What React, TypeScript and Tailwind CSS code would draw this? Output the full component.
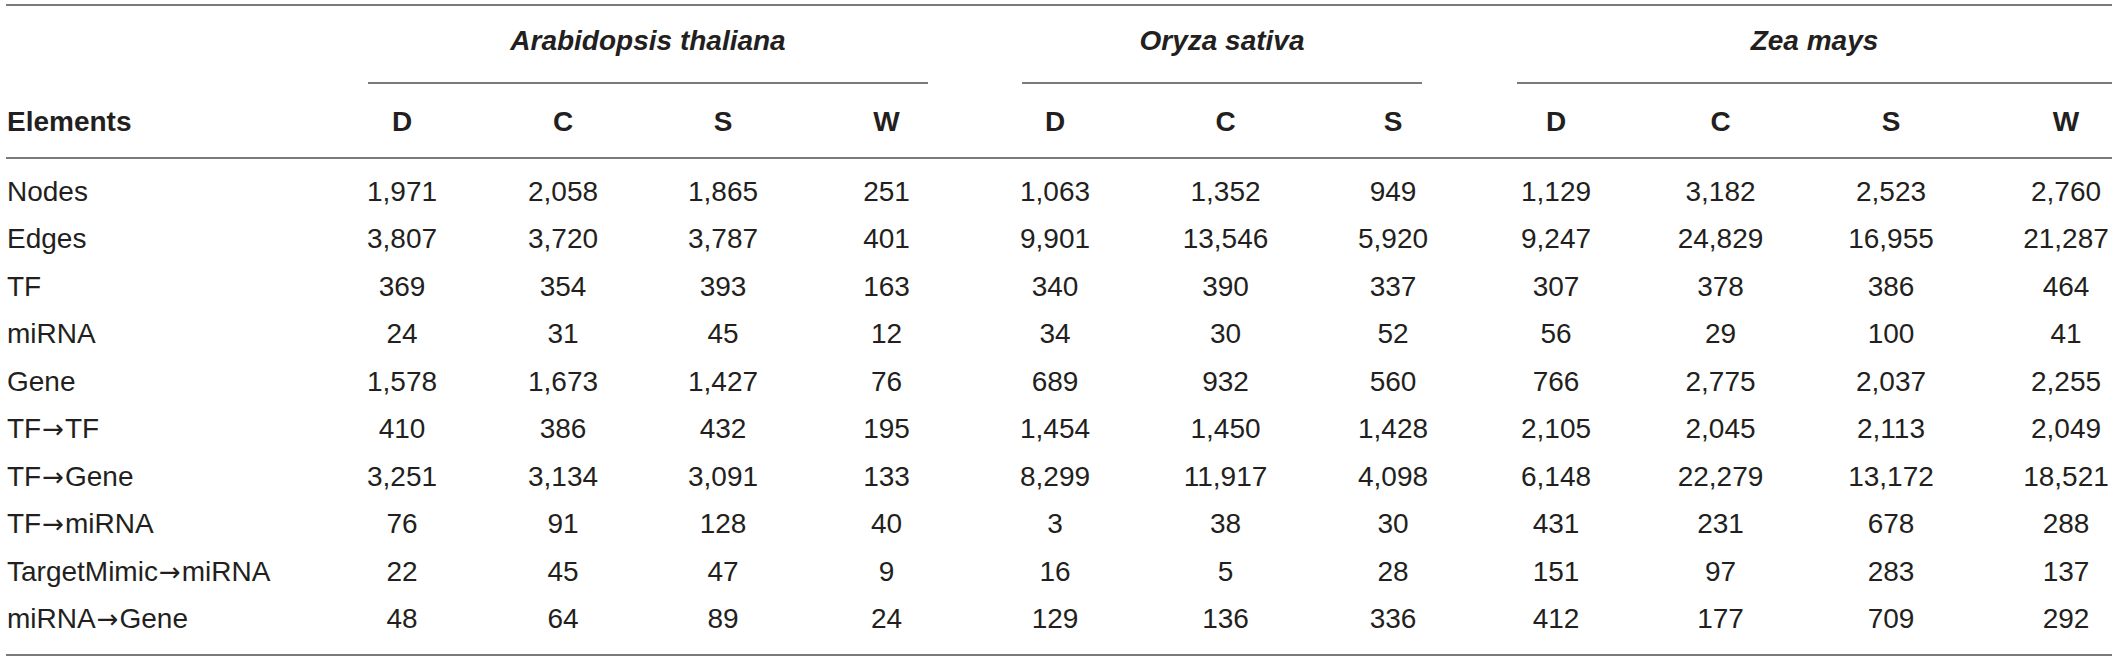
// 统计表格: 三个物种的网络元素数量
// 用 grid 排布列, 每列宽度按原图量出来

// 列宽: 第一列是 Elements, 后面 11 列是数据
const GRID =
  'grid grid-cols-[315px_162px_160px_160px_167px_170px_171px_164px_162px_167px_174px_134px]'

const groups = [
  { name: 'Arabidopsis thaliana', cols: ['D', 'C', 'S', 'W'], span: 'col-span-4', line: 'ml-[47px] mr-[42px]' },
  { name: 'Oryza sativa', cols: ['D', 'C', 'S'], span: 'col-span-3', line: 'ml-[52px] mr-[53px]' },
  { name: 'Zea mays', cols: ['D', 'C', 'S', 'W'], span: 'col-span-4', line: 'ml-[42px]' },
]

const rows: [string, string[]][] = [
  ['Nodes', ['1,971', '2,058', '1,865', '251', '1,063', '1,352', '949', '1,129', '3,182', '2,523', '2,760']],
  ['Edges', ['3,807', '3,720', '3,787', '401', '9,901', '13,546', '5,920', '9,247', '24,829', '16,955', '21,287']],
  ['TF', ['369', '354', '393', '163', '340', '390', '337', '307', '378', '386', '464']],
  ['miRNA', ['24', '31', '45', '12', '34', '30', '52', '56', '29', '100', '41']],
  ['Gene', ['1,578', '1,673', '1,427', '76', '689', '932', '560', '766', '2,775', '2,037', '2,255']],
  ['TF→TF', ['410', '386', '432', '195', '1,454', '1,450', '1,428', '2,105', '2,045', '2,113', '2,049']],
  ['TF→Gene', ['3,251', '3,134', '3,091', '133', '8,299', '11,917', '4,098', '6,148', '22,279', '13,172', '18,521']],
  ['TF→miRNA', ['76', '91', '128', '40', '3', '38', '30', '431', '231', '678', '288']],
  ['TargetMimic→miRNA', ['22', '45', '47', '9', '16', '5', '28', '151', '97', '283', '137']],
  ['miRNA→Gene', ['48', '64', '89', '24', '129', '136', '336', '412', '177', '709', '292']],
]

// 最后一列比较窄, 内容往右推一点
function Cell({ i, children, bold }: { i: number; children: string; bold?: boolean }) {
  return (
    <div className={`flex items-center justify-center ${i === 10 ? 'pl-[42px]' : ''} ${bold ? 'font-bold' : ''}`}>
      {children}
    </div>
  )
}

// 行名里的箭头换成细长一点的字体
function Label({ text }: { text: string }) {
  const parts = text.split('→')
  return (
    <div className="flex items-center pl-[1px]">
      {parts.map((p, i) => (
        <span key={i}>
          {i > 0 && (
            <span className="mx-[1px] text-[26px]" style={{ fontFamily: '"DejaVu Sans", sans-serif' }}>
              →
            </span>
          )}
          {p}
        </span>
      ))}
    </div>
  )
}

function App() {
  return (
    <div
      className="min-h-screen bg-white text-[28px] leading-[28px] text-[#231f20]"
      style={{ fontFamily: '"Liberation Sans", Arial, sans-serif' }}
    >
      <div className="ml-[6px] w-[2106px] pt-[4px]">
        <div className="border-t-2 border-[#7a7a7a]">
          {/* 物种标题 + 下划线 */}
          <div className={GRID}>
            <div />
            {groups.map((g) => (
              <div key={g.name} className={g.span}>
                <div className={`${g.line} flex h-[78px] items-center justify-center border-b-2 border-[#7a7a7a] pb-[6px] font-bold italic`}>
                  {g.name}
                </div>
              </div>
            ))}
          </div>

          {/* 列名 */}
          <div className={`${GRID} h-[75px] border-b-2 border-[#7a7a7a] pt-[3px]`}>
            <div className="flex items-center pl-[1px] font-bold">Elements</div>
            {groups
              .flatMap((g) => g.cols)
              .map((c, i) => (
                <Cell key={i} i={i} bold>
                  {c}
                </Cell>
              ))}
          </div>

          {/* 数据行 */}
          <div className="border-b-2 border-[#7a7a7a] pt-[9px] pb-[11px]">
            {rows.map(([label, vals]) => (
              <div key={label} className={`${GRID} h-[47.5px]`}>
                <Label text={label} />
                {vals.map((v, i) => (
                  <Cell key={i} i={i}>
                    {v}
                  </Cell>
                ))}
              </div>
            ))}
          </div>
        </div>
      </div>
    </div>
  )
}

export default App
